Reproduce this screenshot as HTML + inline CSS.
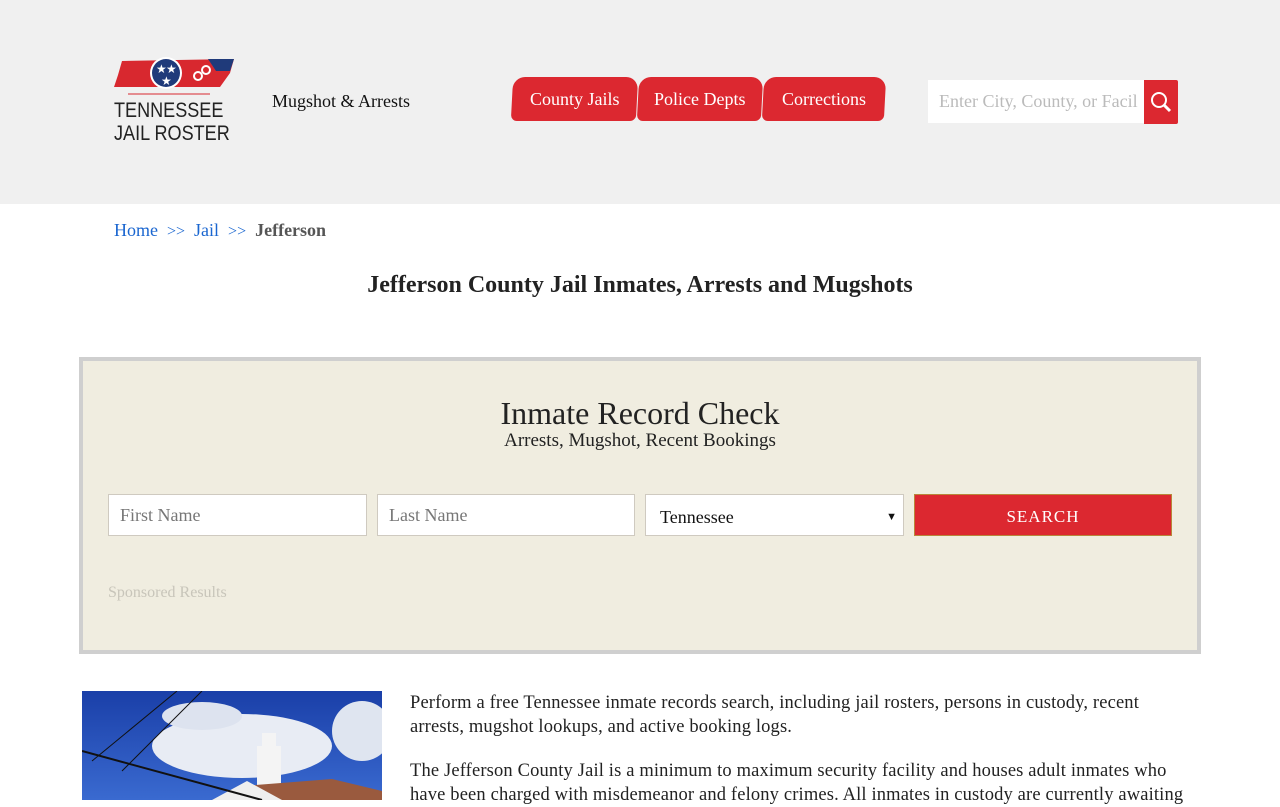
<!DOCTYPE html>
<html><head><meta charset="utf-8"><style>
*{margin:0;padding:0;box-sizing:border-box}
body{width:1280px;height:800px;overflow:hidden;background:#fff;font-family:"Liberation Serif",serif;color:#222;position:relative}
.hdr{position:absolute;left:0;top:0;width:1280px;height:204px;background:#f0f0f0}
.a{position:absolute;white-space:nowrap}
.tab{position:absolute;top:77px;height:44px;background:#dc2830;color:#fff;font-size:18px;line-height:44px;text-align:center;border-radius:12px 12px 6px 6px;transform:skewX(-3deg)}
.tab span{display:inline-block;transform:skewX(3deg)}
.inp{position:absolute;top:494px;height:42px;background:#fff;border:1px solid #cfcac0;font-size:18px;line-height:40px;padding-left:11px;color:#777}
</style></head><body>
<div class="hdr"></div>
<svg class="a" style="left:112px;top:57px" width="126" height="40" viewBox="0 0 126 40">
<path d="M10 4 L122 2 L118 16 L108 30 L2 30 L6 18 Z" fill="#d8282f"/>
<path d="M96 2 L122 2 L118 14 L104 14 Z" fill="#1f3a7a"/>
<circle cx="54" cy="16" r="16" fill="#fff"/><circle cx="54" cy="16" r="14" fill="#1f3a7a"/>
<text x="44" y="16" fill="#fff" font-size="12">★</text><text x="54" y="16" fill="#fff" font-size="12">★</text><text x="49" y="28" fill="#fff" font-size="12">★</text>
<circle cx="86" cy="19" r="4" fill="none" stroke="#fff" stroke-width="2"/><circle cx="94" cy="13" r="4" fill="none" stroke="#fff" stroke-width="2"/>
<line x1="16" y1="37" x2="98" y2="37" stroke="#d8282f" stroke-width="1"/>
</svg>
<div class="a" style="left:114px;top:99px;font-size:21px;color:#222;line-height:23px;transform:scaleX(0.86);transform-origin:0 0;font-family:'Liberation Sans',sans-serif">TENNESSEE<br>JAIL ROSTER</div>
<div class="a" style="left:272px;top:91px;font-size:18px;color:#111">Mugshot &amp; Arrests</div>
<div class="tab" style="left:512px;width:125px"><span>County Jails</span></div>
<div class="tab" style="left:638px;width:124px"><span>Police Depts</span></div>
<div class="tab" style="left:763px;width:122px"><span>Corrections</span></div>
<div class="a" style="left:928px;top:80px;width:216px;height:43px;background:#fff;font-size:18px;line-height:43px;padding-left:11px;color:#bbb;overflow:hidden">Enter City, County, or Facil</div>
<div class="a" style="left:1144px;top:80px;width:34px;height:44px;background:#dc2830;border-radius:0 2px 2px 0">
<svg width="34" height="44"><circle cx="15" cy="20" r="7" fill="none" stroke="#fff" stroke-width="2"/><line x1="20" y1="25" x2="26" y2="31" stroke="#fff" stroke-width="3"/></svg></div>
<div class="a" style="left:114px;top:220px;font-size:18px;color:#1a66d0">Home &nbsp;<span style="font-size:16px">&gt;&gt;</span>&nbsp; Jail &nbsp;<span style="font-size:16px">&gt;&gt;</span>&nbsp; <b style="color:#555">Jefferson</b></div>
<div class="a" style="left:0;width:1280px;text-align:center;top:272px;font-size:24px;font-weight:bold;color:#222">Jefferson County Jail Inmates, Arrests and Mugshots</div>
<div class="a" style="left:79px;top:357px;width:1122px;height:297px;background:#f0ede0;border:4px solid #cfcfcf"></div>
<div class="a" style="left:0;width:1280px;text-align:center;top:395px;font-size:32px;color:#222">Inmate Record Check</div>
<div class="a" style="left:0;width:1280px;text-align:center;top:430px;font-size:19px;color:#222">Arrests, Mugshot, Recent Bookings</div>
<div class="inp" style="left:108px;width:259px">First Name</div>
<div class="inp" style="left:377px;width:258px">Last Name</div>
<div class="inp" style="left:645px;width:259px;color:#111;line-height:44px;padding-left:14px">Tennessee<span style="position:absolute;right:6px;font-size:11px;top:0">&#9660;</span></div>
<div class="a" style="left:914px;top:494px;width:258px;height:42px;background:#dc2830;border:1px solid #b8863a;color:#fff;font-size:17px;letter-spacing:1px;text-align:center;line-height:44px">SEARCH</div>
<div class="a" style="left:108px;top:584px;font-size:16px;color:#c8c5ba">Sponsored Results</div>
<svg class="a" style="left:82px;top:691px" width="300" height="109" viewBox="0 0 300 109">
<defs><linearGradient id="s" x1="0" y1="0" x2="0" y2="1"><stop offset="0" stop-color="#1a3fa8"/><stop offset="1" stop-color="#3a6ad0"/></linearGradient></defs>
<rect width="300" height="109" fill="url(#s)"/>
<ellipse cx="160" cy="55" rx="90" ry="32" fill="#e8ecf4"/><ellipse cx="120" cy="25" rx="40" ry="14" fill="#dde3ef"/><ellipse cx="280" cy="40" rx="30" ry="30" fill="#dfe5f0"/>
<rect x="175" y="55" width="24" height="45" fill="#f4f4f4"/><rect x="180" y="42" width="14" height="14" fill="#f4f4f4"/>
<path d="M130 109 L160 95 L250 88 L300 100 L300 109 Z" fill="#9a5a3e"/><path d="M130 109 L165 90 L200 109 Z" fill="#eee"/>
<line x1="0" y1="60" x2="180" y2="109" stroke="#111" stroke-width="2"/><line x1="40" y1="80" x2="120" y2="0" stroke="#111"/><line x1="10" y1="70" x2="95" y2="0" stroke="#111"/>
</svg>
<div class="a" style="left:410px;top:691px;font-size:18.5px;line-height:24px;color:#222;letter-spacing:0.15px">Perform a free Tennessee inmate records search, including jail rosters, persons in custody, recent<br>arrests, mugshot lookups, and active booking logs.</div>
<div class="a" style="left:410px;top:759px;font-size:18.5px;line-height:24px;color:#222;letter-spacing:0.15px">The Jefferson County Jail is a minimum to maximum security facility and houses adult inmates who<br>have been charged with misdemeanor and felony crimes. All inmates in custody are currently awaiting</div>
</body></html>
